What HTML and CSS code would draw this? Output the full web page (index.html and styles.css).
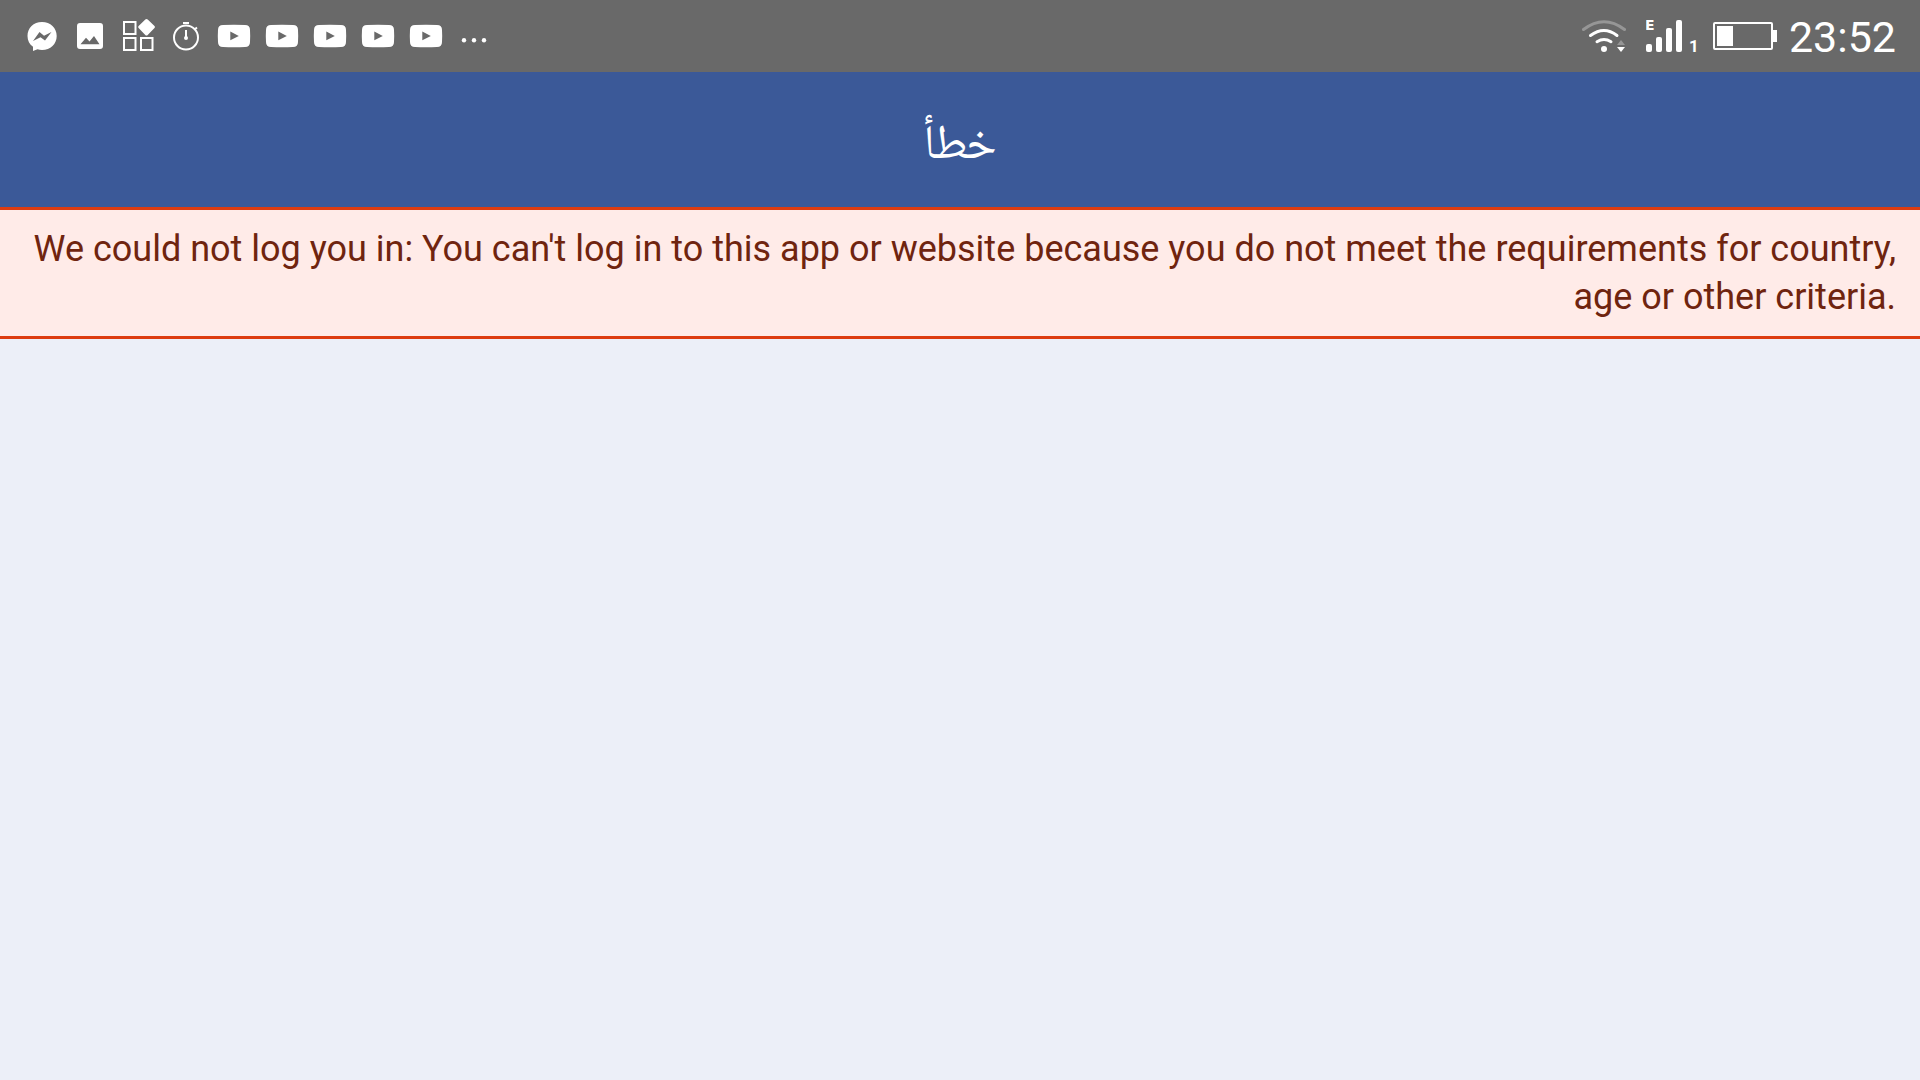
FILE: index.html
```html
<!DOCTYPE html>
<html lang="ar" dir="rtl">
<head>
    <meta charset="UTF-8">
    <meta name="viewport" content="width=device-width, initial-scale=1.0">
    <title>خطأ</title>
    <link rel="stylesheet" href="styles.css">
</head>
<body>
    <svg class="defs" aria-hidden="true">
        <symbol id="video" viewBox="0 0 48 48">
            <path fill-rule="evenodd" d="M13 13Q24 12.4 35 13Q40 13 40 18Q40.4 24 40 30Q40 35 35 35Q24 35.4 13 35Q8 35 8 30Q7.600 24 8 18Q8 13 13 13ZM20.300 19.500V28.300L28.800 23.900Z"/>
        </symbol>
    </svg>

    <div class="status-bar" dir="ltr">
        <div class="notifications">
            <svg class="icon" viewBox="0 0 48 48">
                <path fill-rule="evenodd" d="M24 10C32.500 10 38.700 16 38.700 24S32.500 38 24 38Q21.500 38 19.500 37.300L15 39V34.800C11.500 32.300 9.500 28.500 9.500 24C9.500 16 15.500 10 24 10ZM15 29L21.500 20L26 23.700L33.500 20L27 28.500L22.500 25.200Z"/>
            </svg>
            <svg class="icon" viewBox="0 0 48 48">
                <path fill-rule="evenodd" d="M14 11H34Q37 11 37 14V34Q37 37 34 37H14Q11 37 11 34V14Q11 11 14 11ZM14.500 32.300H33.500L28 24L23.500 29.500L20 25.800Z"/>
            </svg>
            <svg class="icon" viewBox="0 0 48 48">
                <path class="line" d="M10 10H21.500V22H10ZM10 26H21.500V38H10ZM27 26H38.500V38H27Z"/>
                <path d="M31.300 7.500Q32.500 6.400 33.700 7.500L40.500 14Q41.500 15 40.500 16L33.700 23Q32.500 24 31.300 23L24.600 16Q23.600 15 24.600 14Z"/>
            </svg>
            <svg class="icon" viewBox="0 0 48 48">
                <circle class="line" cx="24" cy="25.500" r="12"/>
                <path class="line" d="M21 11H27M24 18V26M32.500 17.500L35 15.500"/>
                <circle cx="24" cy="26" r="2"/>
            </svg>
            <svg class="icon"><use href="#video"/></svg>
            <svg class="icon"><use href="#video"/></svg>
            <svg class="icon"><use href="#video"/></svg>
            <svg class="icon"><use href="#video"/></svg>
            <svg class="icon"><use href="#video"/></svg>
            <svg class="icon" viewBox="0 0 48 48">
                <circle cx="14" cy="28.300" r="2.200"/>
                <circle cx="24" cy="28.300" r="2.200"/>
                <circle cx="34" cy="28.300" r="2.200"/>
            </svg>
        </div>

        <div class="system">
            <svg class="wifi" viewBox="0 0 44 48">
                <path class="arc weak" d="M1.500 17.500Q22 2 42.500 17.500"/>
                <path class="arc" d="M8.500 23.500Q22 13.500 35 23.500M15 29.700Q22 25.500 29 29.700"/>
                <circle cx="22" cy="37" r="3"/>
                <path class="weak-fill" d="M35 33L39 28L43 33Z"/>
                <path d="M35 35L39 40L43 35Z"/>
            </svg>
            <svg class="signal" viewBox="0 0 52 48">
                <text class="network" x="-1" y="18">E</text>
                <rect x="0" y="32" width="6" height="8" rx="2"/>
                <rect x="10" y="25" width="6" height="15" rx="2"/>
                <rect x="20" y="16" width="6" height="24" rx="2"/>
                <rect x="30" y="8" width="6" height="32" rx="2"/>
                <text class="sim" x="43" y="40">1</text>
            </svg>
            <svg class="battery" viewBox="0 0 64 48">
                <rect class="line" x="1" y="11" width="58" height="26" rx="1"/>
                <rect x="4" y="14" width="16" height="20"/>
                <rect x="60" y="18" width="4" height="12"/>
            </svg>
            <span class="clock">23:52</span>
        </div>
    </div>

    <header class="header">
        <h1>خطأ</h1>
    </header>

    <p class="error"><bdi>We could not log you in: You can't log in to this app or website because you do not meet the requirements for country, age or other criteria.</bdi></p>
</body>
</html>
```
FILE: styles.css
```css
body {
    margin: 0;
    min-height: 100vh;
    background-color: #eceff8;
    font-family: Roboto, "Noto Naskh Arabic", "DejaVu Sans", sans-serif;
}
svg {
    display: block;
    fill: #ffffff;
}
.defs {
    display: none;
}
.status-bar {
    display: flex;
    justify-content: space-between;
    align-items: center;
    height: 72px;
    padding: 0 24px 0 18px;
    background-color: #696969;
    color: #ffffff;
}
.notifications,
.system {
    display: flex;
    align-items: center;
}
.icon {
    width: 48px;
    height: 48px;
}
.line {
    fill: none;
    stroke: #ffffff;
    stroke-width: 2;
}
.arc {
    fill: none;
    stroke: #ffffff;
    stroke-width: 3;
    stroke-linecap: round;
}
.weak {
    stroke: #969696;
}
.weak-fill {
    fill: #969696;
}
.wifi {
    width: 44px;
    height: 48px;
    margin-right: 20px;
}
.signal {
    width: 52px;
    height: 48px;
    margin-right: 15px;
}
.network {
    font-family: "DejaVu Sans", sans-serif;
    font-size: 14px;
    font-weight: 700;
}
.sim {
    font-size: 17px;
    font-weight: 700;
}
.battery {
    width: 64px;
    height: 48px;
    margin-right: 12px;
}
.clock {
    padding-top: 2px;
    font-size: 43px;
    line-height: 48px;
}
.header {
    display: flex;
    justify-content: center;
    padding: 40px 24px 35px;
    background-color: #3b5998;
    color: #ffffff;
}
.header h1 {
    margin: 0;
    font-size: 48px;
    font-weight: 400;
    line-height: 60px;
}
.error {
    margin: 0;
    padding: 15px 24px;
    border-top: 3px solid #dd3c10;
    border-bottom: 3px solid #dd3c10;
    background-color: #ffebe8;
    color: #6f240f;
    font-size: 36px;
    line-height: 48px;
}
```
